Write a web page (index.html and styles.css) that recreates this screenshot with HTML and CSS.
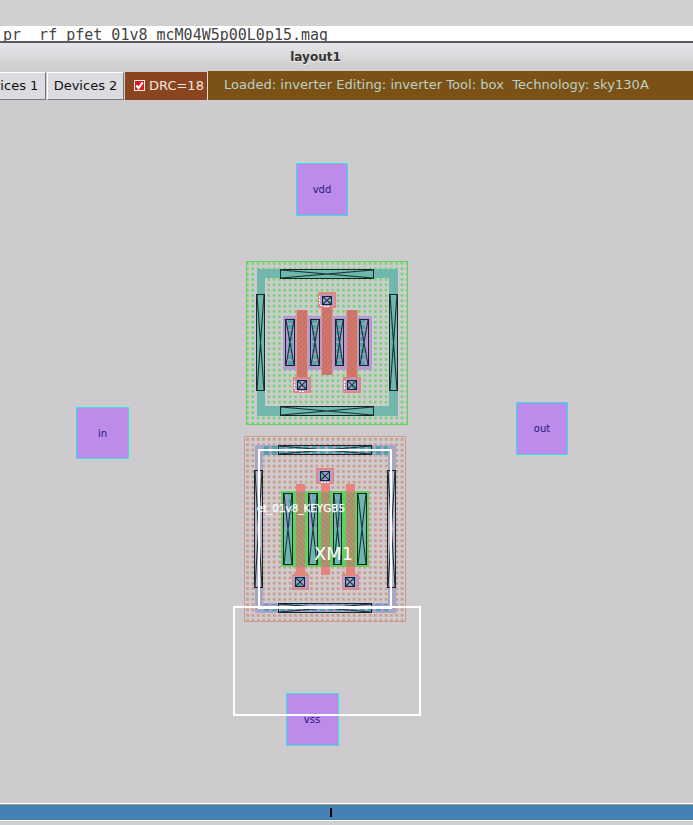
FILE: index.html
```html
<!DOCTYPE html>
<html lang="en">
<head>
<meta charset="utf-8">
<title>layout1</title>
<link rel="stylesheet" href="styles.css">
</head>
<body>
<div class="app">
  <div class="top-gap"></div>
  <div class="file-bar"><span class="file-name">pr__rf_pfet_01v8_mcM04W5p00L0p15.mag</span></div>
  <div class="title-bar"><span class="title">layout1</span></div>
  <div class="toolbar">
    <button class="tool-btn first">Devices 1</button>
    <button class="tool-btn">Devices 2</button>
    <div class="drc"><span class="check"><svg width="9" height="9" viewBox="0 0 10 10"><path d="M1.5 5 L4 8 L8.5 1.5" fill="none" stroke="#fff" stroke-width="2.4"/></svg></span>DRC=18</div>
    <div class="status">Loaded: inverter Editing: inverter Tool: box&nbsp; Technology: sky130A</div>
  </div>
  <main class="canvas">
    <svg class="layout" viewBox="0 100 693 703" width="693" height="703" shape-rendering="crispEdges">
      <defs>
        <pattern id="nwell" width="5.33" height="5.33" patternUnits="userSpaceOnUse" x="1" y="1">
          <rect width="2.5" height="2.5" fill="#68d868" shape-rendering="geometricPrecision"/>
        </pattern>
        <pattern id="pwell" width="5.33" height="5.33" patternUnits="userSpaceOnUse" x="1" y="1">
          <rect width="2.7" height="2.7" fill="#cf9c8a" shape-rendering="geometricPrecision"/>
        </pattern>
        <pattern id="hatch" width="5" height="5" patternUnits="userSpaceOnUse">
          <path d="M0 5 L5 0" stroke="#d68c74" stroke-width=".7" fill="none" shape-rendering="geometricPrecision"/>
        </pattern>
        <pattern id="hatchg" width="5" height="5" patternUnits="userSpaceOnUse">
          <path d="M0 0 L5 5" stroke="#78c070" stroke-width="1" fill="none" shape-rendering="geometricPrecision"/>
        </pattern>
        <pattern id="dashes" width="8" height="6" patternUnits="userSpaceOnUse">
          <rect width="8" height="6" fill="#ac9ad4"/>
          <rect x="0" y="1" width="5" height="4" fill="#4ea6a6"/>
        </pattern>
        <symbol id="ct" viewBox="0 0 10 10" preserveAspectRatio="none">
          <path d="M0 0 L10 10 M10 0 L0 10" stroke="#1a3436" stroke-width="1.1" fill="none" vector-effect="non-scaling-stroke" shape-rendering="geometricPrecision"/>
        </symbol>
      </defs>

      <!-- pfet -->
      <rect class="well-p" x="246.500" y="261.500" width="161" height="163"/>
      <rect x="247" y="262" width="160" height="162" fill="url(#nwell)"/>
      <path class="ring-p" d="M257 269H398V416H257Z M265 278V406H389V278Z" fill-rule="evenodd"/>
      <rect class="ct-box teal" x="280.500" y="269.500" width="93" height="9"/><use href="#ct" x="281" y="270" width="92" height="8"/>
      <rect class="ct-box teal" x="280.500" y="406.500" width="93" height="9"/><use href="#ct" x="281" y="407" width="92" height="8"/>
      <rect class="ct-box teal" x="256.500" y="294.500" width="8" height="96"/><use href="#ct" x="257" y="295" width="7" height="95"/>
      <rect class="ct-box teal" x="389.500" y="294.500" width="8" height="96"/><use href="#ct" x="390" y="295" width="7" height="95"/>

      <rect x="283" y="316" width="13" height="54" class="sd"/>
      <rect x="308" y="316" width="14" height="54" class="sd"/>
      <rect x="333" y="316" width="13" height="54" class="sd"/>
      <rect x="357" y="316" width="15" height="54" class="sd"/>

      <rect class="gate-halo" x="296" y="310" width="12" height="70"/>
      <rect class="gate-halo" x="321" y="300" width="12" height="75"/>
      <rect class="gate-halo" x="346" y="310" width="12" height="70"/>
      <rect class="gate" x="297" y="310" width="10" height="70"/>
      <rect class="gate" x="322" y="300" width="10" height="75"/>
      <rect class="gate" x="347" y="310" width="10" height="70"/>
      <rect class="gate-h" x="297" y="310" width="10" height="70"/>
      <rect class="gate-h" x="322" y="300" width="10" height="75"/>
      <rect class="gate-h" x="347" y="310" width="10" height="70"/>

      <rect class="ct-box diff" x="285.500" y="319.500" width="9" height="46"/><use href="#ct" x="286" y="320" width="8" height="45"/>
      <rect class="ct-box diff" x="310.500" y="319.500" width="9" height="46"/><use href="#ct" x="311" y="320" width="8" height="45"/>
      <rect class="ct-box diff" x="335.500" y="319.500" width="8" height="46"/><use href="#ct" x="336" y="320" width="7" height="45"/>
      <rect class="ct-box diff" x="359.500" y="319.500" width="9" height="46"/><use href="#ct" x="360" y="320" width="8" height="45"/>

      <rect class="pad" x="318" y="292" width="18" height="16"/><rect class="pad-in" x="320" y="295" width="14" height="11"/>
      <rect class="ct-box diff" x="322.500" y="296.500" width="9" height="8"/><use href="#ct" x="323" y="297" width="8" height="7"/>
      <path class="sparkle" d="M319.500 296V305H322M324 306.500H330"/>
      <rect class="pad" x="293" y="377" width="18" height="16"/><rect class="pad-in" x="295" y="379" width="14" height="12"/>
      <rect class="ct-box diff" x="297.500" y="380.500" width="9" height="9"/><use href="#ct" x="298" y="381" width="8" height="8"/>
      <path class="sparkle" d="M294.500 381V390H297M299 391.500H305"/>
      <rect class="pad" x="343" y="377" width="18" height="16"/><rect class="pad-in" x="345" y="379" width="14" height="12"/>
      <rect class="ct-box diff" x="347.500" y="380.500" width="9" height="9"/><use href="#ct" x="348" y="381" width="8" height="8"/>
      <path class="sparkle" d="M344.500 381V390"/>

      <!-- nfet -->
      <rect class="well-n" x="244.500" y="436.500" width="161" height="185"/>
      <rect x="245" y="437" width="160" height="184" fill="url(#pwell)"/>
      <path class="ring-n" d="M255 445H396V613H255Z M263 455V603H388V455Z" fill-rule="evenodd"/>
      <rect x="263" y="446" width="125" height="9" fill="url(#dashes)"/>
      <rect x="263" y="604" width="125" height="8" fill="url(#dashes)"/>
      <rect class="ct-box dashed" x="278.500" y="445.500" width="93" height="9"/><use href="#ct" x="279" y="446" width="92" height="8"/>
      <rect class="ct-box dashed" x="278.500" y="603.500" width="93" height="9"/><use href="#ct" x="279" y="604" width="92" height="8"/>
      <rect class="ct-box lav" x="254.500" y="470.500" width="8" height="117"/><use href="#ct" x="255" y="471" width="7" height="116"/>
      <rect class="ct-box lav" x="387.500" y="470.500" width="8" height="117"/><use href="#ct" x="388" y="471" width="7" height="116"/>

      <rect class="ndiff" x="281" y="491" width="88" height="76"/>
      <rect class="gate-n" x="296" y="484" width="9" height="90"/>
      <rect class="gate-n" x="321" y="480" width="9" height="94"/>
      <rect class="gate-n" x="346" y="484" width="9" height="90"/>
      <rect class="gate-g" x="296" y="492" width="9" height="75"/>
      <rect class="gate-g" x="321" y="492" width="9" height="75"/>
      <rect class="gate-g" x="346" y="492" width="9" height="75"/>
      <rect class="gate-top" x="296" y="484" width="9" height="8"/>
      <rect class="gate-top" x="321" y="480" width="9" height="12"/>
      <rect class="gate-top" x="346" y="484" width="9" height="8"/>
      <rect class="gate-top" x="296" y="567" width="9" height="8"/>
      <rect class="gate-top" x="321" y="567" width="9" height="8"/>
      <rect class="gate-top" x="346" y="567" width="9" height="8"/>

      <rect class="ct-box teal" x="283.500" y="493.500" width="9" height="71"/>
      <rect class="ct-box teal" x="308.500" y="493.500" width="9" height="71"/>
      <rect class="ct-box teal" x="333.500" y="493.500" width="8" height="71"/>
      <rect class="ct-box teal" x="357.500" y="493.500" width="9" height="71"/>
      <rect x="284" y="494" width="8" height="34" fill="url(#dashes)" opacity=".6"/>
      <rect x="309" y="494" width="8" height="34" fill="url(#dashes)" opacity=".6"/>
      <rect x="334" y="494" width="7" height="34" fill="url(#dashes)" opacity=".6"/>
      <use href="#ct" x="284" y="494" width="8" height="70"/>
      <use href="#ct" x="309" y="494" width="8" height="70"/>
      <use href="#ct" x="334" y="494" width="7" height="70"/>
      <use href="#ct" x="358" y="494" width="8" height="70"/>

      <rect class="pad" x="316" y="468" width="18" height="16"/><rect class="pad-in" x="318" y="470" width="14" height="12"/>
      <rect class="ct-box diff" x="320.500" y="471.500" width="9" height="9"/><use href="#ct" x="321" y="472" width="8" height="8"/>
      <path class="sparkle" d="M321 482.500H329"/>
      <rect class="pad" x="292" y="574" width="17" height="16"/><rect class="pad-in" x="293" y="576" width="15" height="12"/>
      <rect class="ct-box diff" x="295.500" y="577.500" width="9" height="9"/><use href="#ct" x="296" y="578" width="8" height="8"/>
      <rect class="pad" x="342" y="574" width="17" height="16"/><rect class="pad-in" x="343" y="576" width="15" height="12"/>
      <rect class="ct-box diff" x="345.500" y="577.500" width="9" height="9"/><use href="#ct" x="346" y="578" width="8" height="8"/>

      <rect class="cell-box" x="259" y="450" width="132" height="158"/>
      <text class="cell-name" x="345" y="512" text-anchor="end">et_01v8_KEYGB5</text>
      <text class="cell-id" x="314" y="560">XM1</text>

      <!-- pins -->
      <rect class="pin" x="296.500" y="163.500" width="51" height="52"/>
      <text class="pin-label" x="322" y="193" text-anchor="middle">vdd</text>
      <rect class="pin" x="76.500" y="407.500" width="52" height="51"/>
      <text class="pin-label" x="102.500" y="437" text-anchor="middle">in</text>
      <rect class="pin" x="516.500" y="402.500" width="51" height="52"/>
      <text class="pin-label" x="542" y="432" text-anchor="middle">out</text>
      <rect class="pin" x="286.500" y="693.500" width="52" height="52"/>
      <text class="pin-label" x="312" y="723" text-anchor="middle">vss</text>

      <rect class="select-box" x="234" y="607" width="186" height="108"/>
    </svg>
  </main>
  <div class="scrollbar"><span class="thumb"></span></div>
</div>
</body>
</html>
```

FILE: styles.css
```css
* { box-sizing: border-box; }
html, body { margin: 0; padding: 0; }
body { width: 693px; height: 825px; overflow: hidden; background: #cfcfcf; font-family: "DejaVu Sans", sans-serif; }
.app { display: flex; flex-direction: column; height: 825px; overflow: hidden; }
.top-gap { height: 26px; background: #d0d0d0; flex: none; }
.file-bar { height: 15px; flex: none; background: #fff; overflow: hidden; padding-left: 3px; }
.file-name { display: block; font: 15px/18px "DejaVu Sans Mono", monospace; color: #444; white-space: pre; }
.title-bar { height: 30px; flex: none; border-top: 2px solid #5a5a5a; background: linear-gradient(#e8e5ea, #dedde0 30%, #cfcfcf 85%); display: flex; align-items: center; justify-content: center; }
.title { font: bold 12px "DejaVu Sans", sans-serif; color: #333; text-shadow: 0 1px 0 #eee; margin-left: -62px; }
.toolbar { height: 29px; flex: none; display: flex; background: #cdcbce; }
.tool-btn { height: 28px; width: 77px; margin: 1px 1px 0 0; padding: 0 0 2px; flex: none; background: #dcdbdf; border: 1px solid; border-color: #fff #777 #777 #fff; font: 13px "DejaVu Sans", sans-serif; color: #111; }
.tool-btn.first { width: 79px; margin-left: -33px; text-align: center; }
.drc { width: 83px; height: 28px; margin-top: 1px; flex: none; background: #8a4520; border-right: 1px solid #ddd; display: flex; align-items: center; gap: 4px; padding: 0 0 2px 9px; color: #f0e6dc; font-size: 13px; }
.check { width: 11px; height: 11px; background: #e0181c; border: 1px solid #eee; display: flex; align-items: center; justify-content: center; flex: none; }
.status { flex: 1; height: 29px; background: #7b5116; color: #bcd0c4; font-size: 13.1px; line-height: 28px; padding-left: 16px; white-space: nowrap; }
.canvas { height: 703px; flex: none; background: #cdcbce; }
.layout { display: block; }
.scrollbar { flex: 1; position: relative; background: linear-gradient(#fff 0 1px, #a09c98 1px 2px, #4482b6 2px 17px, #fff 17px 18px, #cfcfcf 18px); }
.thumb { position: absolute; left: 330px; top: 5px; width: 2px; height: 9px; background: #000; }

.well-p { fill: none; stroke: #5fd45f; }
.well-n { fill: none; stroke: #cc9c8a; }
.ring-p { fill: #71b8ac; }
.ring-n { fill: #a6a6c8; }
.ct-box { stroke: #14262a; }
.ct-box.teal { fill: #6cb8aa; }
.ct-box.lav { fill: #b4b4d2; }
.ct-box.diff { fill: url(#dashes); }
.ct-box.dashed { fill: url(#dashes); }
.sd { fill: #b39ad2; }
.gate-halo { fill: #d99a90; }
.gate { fill: #cc706a; }
.gate-h { fill: url(#hatch); }
.gate-g { fill: url(#hatchg); }
.pad { fill: #dd8880; }
.pad-in { fill: #b79ad6; }
.ndiff { fill: #62d060; }
.gate-n { fill: #b8866c; }
.gate-top { fill: #e6837c; }
.sparkle { fill: none; stroke: #fff; stroke-dasharray: 2 1; }
.cell-box { fill: none; stroke: #fff; stroke-width: 2; }
.cell-name { font: 10.4px "DejaVu Sans", sans-serif; fill: #fff; stroke: #fff; stroke-width: .25; }
.cell-id { font: 18px "DejaVu Sans", sans-serif; fill: #fff; }
.pin { fill: #bd8cea; stroke: #2fe6e6; }
.pin-label { font: 10px "DejaVu Sans", sans-serif; fill: #1f1a80; }
.select-box { fill: none; stroke: #fff; stroke-width: 2; }
```
